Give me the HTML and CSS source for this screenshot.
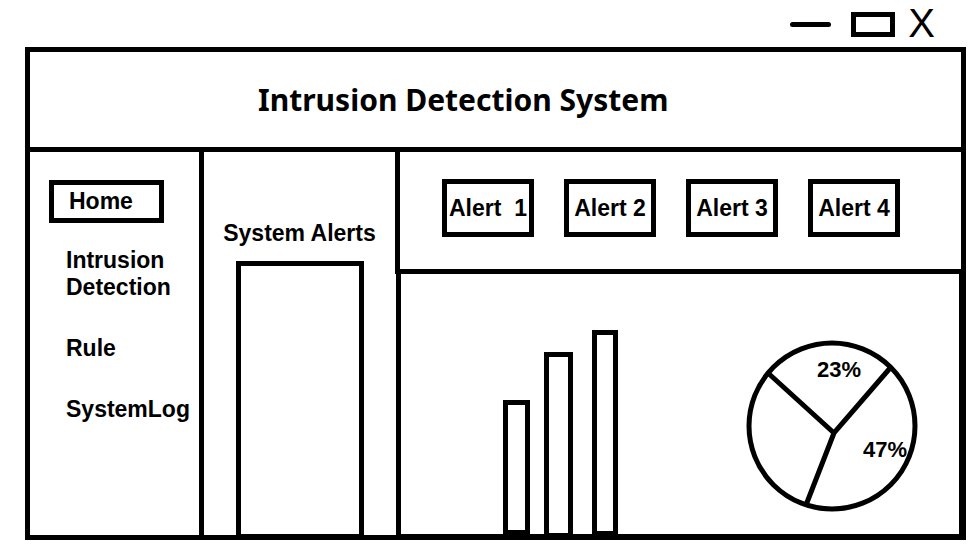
FILE: index.html
```html
<!DOCTYPE html>
<html lang="en">
<head>
<meta charset="utf-8">
<meta name="viewport" content="width=device-width, initial-scale=1">
<title>Intrusion Detection System</title>
<link rel="stylesheet" href="styles.css">
</head>
<body>
<div class="controls">
  <button class="minimise" type="button" aria-label="Minimise"></button>
  <button class="maximise" type="button" aria-label="Maximise"></button>
  <button class="close" type="button" aria-label="Close">X</button>
</div>
<div class="window">
  <header class="header"><h1>Intrusion Detection System</h1></header>
  <div class="columns">
    <nav class="sidebar">
      <a class="current" href="#home">Home</a>
      <ul class="links">
        <li><a href="#detection">Intrusion<br>Detection</a></li>
        <li><a href="#rule">Rule</a></li>
        <li><a href="#log">SystemLog</a></li>
      </ul>
    </nav>
    <section class="system">
      <h2>System Alerts</h2>
      <div class="list"></div>
    </section>
    <main class="content">
      <div class="alerts">
        <button type="button">Alert  1</button>
        <button type="button">Alert 2</button>
        <button type="button">Alert 3</button>
        <button type="button">Alert 4</button>
      </div>
      <div class="charts">
        <svg class="bars" width="115" height="205" viewBox="0 0 115 205" role="img" aria-label="Bar chart">
          <path class="solid" fill-rule="evenodd" d="M0 70H27V205H0ZM5 75V200H22V75ZM41 22H70V205H41ZM46 27V203H65V27ZM89 0H115V205H89ZM94 5V201H110V5Z"/>
          <path class="solid" d="M0 204H115V205H0Z"/>
        </svg>
        <svg class="pie" width="172" height="172" viewBox="0 0 172 172" role="img" aria-label="Pie chart">
          <circle class="line" cx="86" cy="86" r="83"/>
          <path class="line" d="M22 33L88 93L145 27M88 93L60 165"/>
          <text x="71" y="37">23%</text>
          <text x="117" y="117">47%</text>
        </svg>
      </div>
    </main>
  </div>
</div>
</body>
</html>
```
FILE: styles.css
```css
* { box-sizing: border-box; }

body {
  margin: 0;
  min-height: 100vh;
  padding: 0 10px 13px 25px;
  display: flex;
  flex-direction: column;
  background: #fff;
  color: #000;
  font: bold 23px/27px "Liberation Sans", Arial, sans-serif;
}

button {
  margin: 0;
  padding: 0;
  border: 5px solid #000;
  background: none;
  color: inherit;
  font: inherit;
}

h1, h2, ul { margin: 0; padding: 0; }
a { color: inherit; text-decoration: none; }

.controls {
  height: 47px;
  padding: 2px 31px 0 0;
  display: flex;
  justify-content: flex-end;
  align-items: center;
}

.minimise {
  width: 41px;
  height: 5px;
  margin-right: 20px;
  border: 0;
  border-radius: 3px;
  background: #000;
}

.maximise {
  width: 44px;
  height: 25px;
  margin-right: 13px;
}

.close {
  padding-bottom: 4px;
  border: 0;
  font-size: 40px;
  font-weight: normal;
  line-height: 40px;
}

.window {
  flex: 1;
  display: flex;
  flex-direction: column;
  border: 5px solid #000;
}

.header {
  padding: 26px 20px 25px 228px;
  border-bottom: 5px solid #000;
}

.header h1 { font: bold 30px/44px "Noto Sans", sans-serif; }

.columns {
  flex: 1;
  display: grid;
  grid-template-columns: 174px 191px 1fr;
}

.sidebar {
  padding: 28px 0 28px 19px;
  border-right: 5px solid #000;
}

.current {
  display: block;
  width: 115px;
  padding: 3px 15px;
  border: 5px solid #000;
}

.links {
  margin-top: 24px;
  padding-left: 17px;
  display: flex;
  flex-direction: column;
  gap: 34px;
  list-style: none;
}

.system {
  padding-top: 68px;
  display: flex;
  flex-direction: column;
  align-items: center;
  gap: 14px;
}

.system h2 { font: inherit; }

.list {
  flex: 1;
  width: 128px;
  border: 5px solid #000;
  border-bottom-width: 1px;
}

.content {
  display: flex;
  flex-direction: column;
}

.alerts {
  padding: 27px 42px 32px;
  display: flex;
  gap: 30px;
  border-left: 5px solid #000;
  border-bottom: 5px solid #000;
}

.alerts button {
  width: 92px;
  height: 58px;
  white-space: pre;
}

.charts {
  flex: 1;
  margin-left: 1px;
  padding-left: 102px;
  display: flex;
  align-items: flex-end;
  gap: 128px;
  border: solid #000;
  border-width: 0 2px 1px 5px;
}

.bars, .pie { display: block; }
.bars { margin-bottom: -1px; }
.pie { margin-bottom: 22px; }
.solid { fill: #000; }
.line { fill: none; stroke: #000; stroke-width: 5px; }
.pie text { font-size: 22px; }
```
